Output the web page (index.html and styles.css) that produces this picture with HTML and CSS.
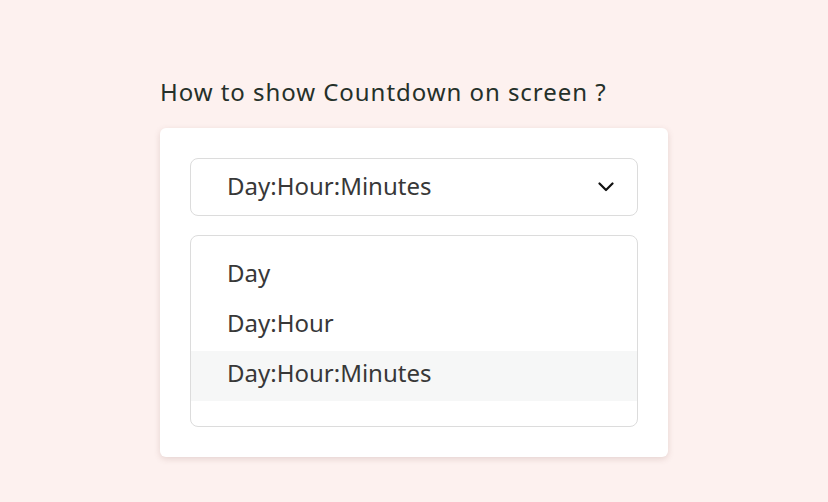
FILE: index.html
```html
<!DOCTYPE html>
<html>
<head>
<meta charset="utf-8">
<link rel="stylesheet" href="styles.css">
</head>
<body>
<div class="wrap">
  <h1 class="title">How to show Countdown on screen ?</h1>
  <div class="card">
    <div class="select">
      <span class="value">Day:Hour:Minutes</span>
      <svg class="chev" width="16" height="10" viewBox="0 0 16 10"><path d="M1.5 1.5 L8 8 L14.5 1.5" fill="none" stroke="#111" stroke-width="2.2" stroke-linecap="round" stroke-linejoin="round"/></svg>
    </div>
    <ul class="list">
      <li class="item">Day</li>
      <li class="item">Day:Hour</li>
      <li class="item active">Day:Hour:Minutes</li>
    </ul>
  </div>
</div>
</body>
</html>
```
FILE: styles.css
```css
html, body { margin: 0; padding: 0; }
body {
  background: #fdf1ef;
  font-family: "Noto Sans", "Open Sans", sans-serif;
  width: 828px;
  height: 502px;
  overflow: hidden;
}
.wrap {
  padding: 76px 0 0 160px;
  width: 508px;
}
.title {
  margin: 0 0 20px 0;
  font-size: 24px;
  font-weight: 400;
  line-height: 32px;
  letter-spacing: 0.95px;
  color: #253029;
}
.card {
  background: #fff;
  border-radius: 6px;
  box-shadow: 0 2px 6px rgba(120, 80, 70, 0.18);
  padding: 30px 30px 30px 30px;
}
.select {
  height: 56px;
  border: 1px solid #dcdcdc;
  border-radius: 8px;
  display: flex;
  align-items: center;
  justify-content: space-between;
  padding: 0 23px 0 36px;
}
.value {
  font-size: 24px;
  line-height: 32px;
  margin-top: -2px;
  color: #383838;
}
.list {
  list-style: none;
  margin: 19px 0 0 0;
  padding: 15px 0 25px 0;
  border: 1px solid #dcdcdc;
  border-radius: 8px;
}
.item {
  height: 50px;
  line-height: 44px;
  padding-left: 36px;
  font-size: 24px;
  color: #383838;
}
.item.active { background: #f6f7f7; }
```
